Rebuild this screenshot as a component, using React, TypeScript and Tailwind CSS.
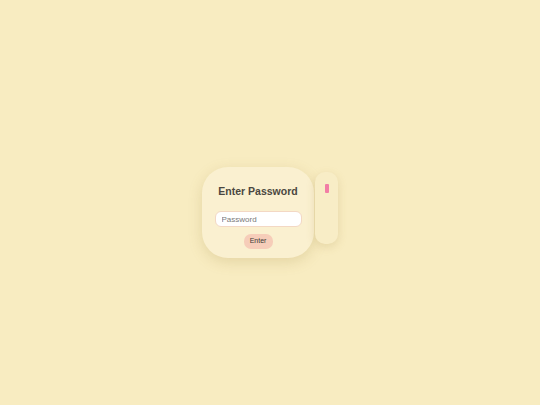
export default function App() {
  return (
    <div
      className="min-h-screen w-full bg-[#f8ecc1] flex items-center justify-center pt-[20px]"
      style={{ fontFamily: '"Liberation Sans", Arial, sans-serif' }}
    >
      <div className="flex items-start gap-[1px]">
        <div className="w-[112px] h-[91px] rounded-[26px] bg-[#faf0d0] shadow-[0_4px_14px_rgba(160,130,60,0.22)] flex flex-col items-center pt-[17px]">
          <div className="text-[10.5px] font-bold leading-[14px] text-[#4a4740]">Enter Password</div>
          <input
            type="password"
            placeholder="Password"
            className="mt-[13px] w-[87px] h-[16px] rounded-[6px] bg-white border border-[#f3d8c4] px-[6px] text-[8px] text-[#555] placeholder:text-[#7a7a7a] outline-none"
          />
          <button
            type="button"
            className="mt-[7px] w-[29px] h-[15px] rounded-[7px] bg-[#f6cdb9] text-[7px] text-[#3d3a36] flex items-center justify-center"
          >
            Enter
          </button>
        </div>
        <div className="mt-[5px] w-[23px] h-[72px] rounded-[10px] bg-[#f8edc6] shadow-[0_3px_10px_rgba(160,130,60,0.2)] flex justify-center pt-[12px]">
          <div className="w-[4px] h-[9px] bg-[#f27ea5] rounded-[1px]" />
        </div>
      </div>
    </div>
  );
}
